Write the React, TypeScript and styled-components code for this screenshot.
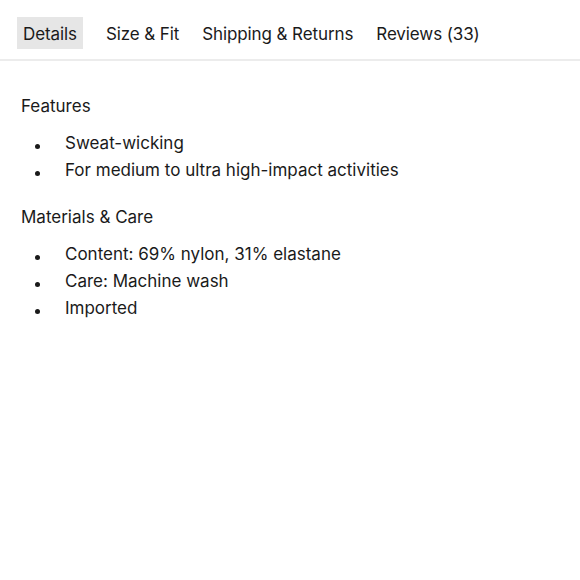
import React from 'react';
import styled, { createGlobalStyle } from 'styled-components';

const GlobalStyle = createGlobalStyle`
  body {
    margin: 0;
    background: #fff;
    font-family: Inter, "Open Sans", sans-serif;
    color: #1a1a1a;
  }
`;

const Page = styled.div`
  width: 580px;
  min-height: 580px;
  box-sizing: border-box;
`;

const TabBar = styled.nav`
  display: flex;
  align-items: center;
  gap: 11px;
  padding: 17px 0 10px 17px;
  border-bottom: 2px solid #ececec;
`;

const Tab = styled.button<{ active?: boolean }>`
  border: none;
  margin: 0 ${(p) => (p.active ? '6px' : '0')} 0 0;
  padding: 1px 6px 0;
  height: 32px;
  font: 400 17px Inter, sans-serif;
  letter-spacing: -0.1px;
  color: #1a1a1a;
  background: ${(p) => (p.active ? '#e6e6e6' : 'transparent')};
`;

const Content = styled.section`
  padding: 32px 21px 0 21px;
`;

const Heading = styled.h3`
  margin: 0 0 10px;
  font: 400 17px/27px Inter, sans-serif;
`;

const List = styled.ul`
  margin: 0 0 20px;
  padding: 0 0 0 44px;
  list-style: none;
`;

const Item = styled.li`
  position: relative;
  font: 400 17px/27px Inter, sans-serif;
  &::before {
    content: '';
    position: absolute;
    left: -30px;
    top: 14px;
    width: 5px;
    height: 5px;
    border-radius: 50%;
    background: #1a1a1a;
  }
`;

const sections = [
  { title: 'Features', items: ['Sweat-wicking', 'For medium to ultra high-impact activities'] },
  {
    title: 'Materials & Care',
    items: ['Content: 69% nylon, 31% elastane', 'Care: Machine wash', 'Imported'],
  },
];

const App = () => {
  return (
    <Page>
      <GlobalStyle />
      <TabBar>
        <Tab active>Details</Tab>
        <Tab>Size &amp; Fit</Tab>
        <Tab>Shipping &amp; Returns</Tab>
        <Tab>Reviews (33)</Tab>
      </TabBar>
      <Content>
        {sections.map((s) => (
          <div key={s.title}>
            <Heading>{s.title}</Heading>
            <List>
              {s.items.map((i) => (
                <Item key={i}>{i}</Item>
              ))}
            </List>
          </div>
        ))}
      </Content>
    </Page>
  );
};

export default App;
